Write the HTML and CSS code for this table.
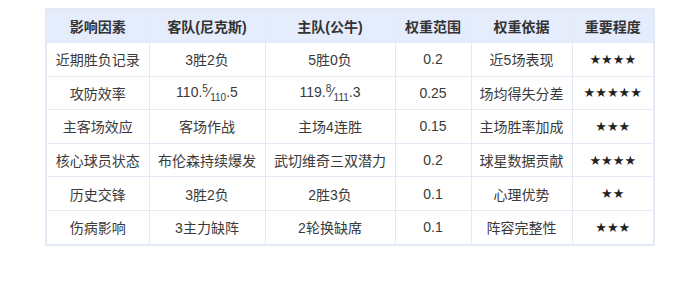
FILE: index.html
```html
<!DOCTYPE html>
<html>
<head>
    <meta charset="utf-8">
    <title>影响因素权重</title>
    <link rel="stylesheet" href="styles.css">
</head>
<body>
<div class="wrap">
    <table class="factors">
        <colgroup>
            <col class="c1"><col class="c2"><col class="c3"><col class="c4"><col class="c5"><col class="c6">
        </colgroup>
        <thead>
        <tr>
            <th>影响因素</th>
            <th>客队(尼克斯)</th>
            <th>主队(公牛)</th>
            <th>权重范围</th>
            <th>权重依据</th>
            <th>重要程度</th>
        </tr>
        </thead>
        <tbody>
        <tr><td>近期胜负记录</td><td>3胜2负</td><td>5胜0负</td><td>0.2</td><td>近5场表现</td><td class="stars">★★★★</td></tr>
        <tr><td>攻防效率</td><td>110.<span class="num">5</span>⁄<span class="den">110</span>.5</td><td>119.<span class="num">8</span>⁄<span class="den">111</span>.3</td><td>0.25</td><td>场均得失分差</td><td class="stars">★★★★★</td></tr>
        <tr><td>主客场效应</td><td>客场作战</td><td>主场4连胜</td><td>0.15</td><td>主场胜率加成</td><td class="stars">★★★</td></tr>
        <tr><td>核心球员状态</td><td>布伦森持续爆发</td><td>武切维奇三双潜力</td><td>0.2</td><td>球星数据贡献</td><td class="stars">★★★★</td></tr>
        <tr><td>历史交锋</td><td>3胜2负</td><td>2胜3负</td><td>0.1</td><td>心理优势</td><td class="stars">★★</td></tr>
        <tr><td>伤病影响</td><td>3主力缺阵</td><td>2轮换缺席</td><td>0.1</td><td>阵容完整性</td><td class="stars">★★★</td></tr>
        </tbody>
    </table>
</div>
</body>
</html>
```

FILE: styles.css
```css
body{
    margin: 0;
    background-color: #ffffff;
    font-family: "Liberation Sans", "Noto Sans CJK SC", sans-serif;
    color: #333333;
}
.wrap{
    padding: 8px 45px;
}
.factors{
    width: 609px;
    table-layout: fixed;
    border-collapse: collapse;
    border: 2px solid #e4e9f6;
    font-size: 14px;
}
.factors .c1{ width: 103px; }
.factors .c2{ width: 116px; }
.factors .c3{ width: 130px; }
.factors .c4{ width: 76px; }
.factors .c5{ width: 101px; }
.factors .c6{ width: 82px; }
.factors th{
    height: 32px;
    padding: 0;
    background-color: #e5ecfb;
    border: 1px solid #e4e9f6;
    font-weight: bold;
    color: #333333;
    text-align: center;
}
.factors td{
    height: 32.6px;
    padding: 0;
    border: 1px solid #e4e9f6;
    text-align: center;
    color: #3a3a3a;
}
.factors .num{
    font-size: 10px;
    vertical-align: 5px;
}
.factors .den{
    font-size: 10px;
    vertical-align: -4px;
}
.factors .stars{
    color: #222222;
    font-family: "DejaVu Sans", sans-serif;
    font-size: 13px;
}
```
